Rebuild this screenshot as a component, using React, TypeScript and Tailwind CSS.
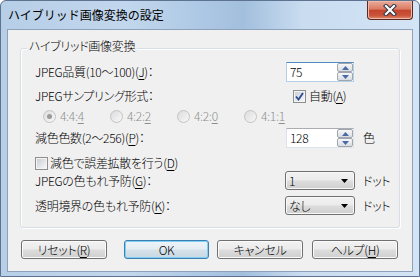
import type { ReactNode } from "react";

const btnBg =
  "bg-[linear-gradient(to_bottom,#f2f2f2_0%,#ebebeb_48%,#dddddd_52%,#cfcfcf_100%)]";

function Key({ children }: { children: ReactNode }) {
  return <span className="underline underline-offset-[2px]">{children}</span>;
}

function SpinArrow({ up }: { up?: boolean }) {
  return (
    <div className="flex flex-1 items-center justify-center rounded-[2px] border border-[#9fa6ad] bg-linear-to-b from-[#f7f7f7] to-[#d9dde2]">
      <svg width="7" height="4" viewBox="0 0 7 4">
        <path d={up ? "M0 4 L3.5 0 L7 4 Z" : "M0 0 L3.5 4 L7 0 Z"} fill="#4a69a8" />
      </svg>
    </div>
  );
}

function Spin({ value, focused }: { value: string; focused?: boolean }) {
  return (
    <div
      className={`flex h-[20px] w-[68px] border bg-white ${
        focused ? "border-[#b6d0e8] border-t-[#4f8ac0]" : "border-[#dde3ea] border-t-[#abadb3]"
      }`}
    >
      <div className="flex flex-1 items-center pl-[3px]">{value}</div>
      <div className="flex w-[16px] flex-col">
        <SpinArrow up />
        <SpinArrow />
      </div>
    </div>
  );
}

function Combo({ value }: { value: string }) {
  return (
    <div
      className={`flex h-[19px] w-[70px] items-center justify-between rounded-[3px] border border-[#707070] pl-[3px] pr-[6px] shadow-[inset_0_0_0_1px_#f8f8f8] ${btnBg}`}
    >
      <span>{value}</span>
      <svg width="7" height="4" viewBox="0 0 7 4">
        <path d="M0 0 L7 0 L3.5 4 Z" fill="#000" />
      </svg>
    </div>
  );
}

function Check({ checked }: { checked?: boolean }) {
  return (
    <div className="flex h-[13px] w-[13px] items-center justify-center border border-[#8e8f8f] bg-white">
      <div className="flex h-[11px] w-[11px] items-center justify-center border border-[#f4f4f4] bg-linear-to-br from-[#cbcfd5] to-[#f6f6f6]">
        {checked && (
          <svg width="9" height="9" viewBox="0 0 9 9">
            <path d="M1 4.5 L3.5 7.5 L8 1" stroke="#2a4a96" strokeWidth="1.8" fill="none" />
          </svg>
        )}
      </div>
    </div>
  );
}

function Radio({ label, k, checked }: { label: string; k: string; checked?: boolean }) {
  return (
    <div className="flex w-[67px] items-center gap-[4px] text-[#8d8d8d]">
      <div className="flex h-[13px] w-[13px] items-center justify-center rounded-full border border-[#c4c4c4] bg-linear-to-br from-[#dcdcdc] to-[#f8f8f8]">
        {checked && <div className="h-[5px] w-[5px] rounded-full bg-[#9a9a9a]" />}
      </div>
      <span>
        {label}
        <Key>{k}</Key>
      </span>
    </div>
  );
}

function Btn({ children, def, className }: { children: ReactNode; def?: boolean; className: string }) {
  return (
    <button
      className={`flex h-[19px] items-center justify-center rounded-[3px] border ${
        def
          ? "border-[#3c7fb1] shadow-[inset_0_0_0_1px_#7fd0f4] bg-[linear-gradient(to_bottom,#eef4f8_0%,#e4edf3_48%,#d6e2ea_52%,#c9d7e1_100%)]"
          : `border-[#707070] shadow-[inset_0_0_0_1px_#fbfbfb] ${btnBg}`
      } ${className}`}
    >
      {children}
    </button>
  );
}

export default function App() {
  return (
    <div className="flex h-[277px] w-[420px] flex-col overflow-hidden rounded-t-[6px] border border-[#5d7390] bg-[linear-gradient(to_right,#b7cee8_0%,#c2d7ed_30%,#adc8e4_48%,#a2bfdd_58%,#c9dcf0_72%,#d3e4f5_100%)] font-['Noto_Sans_CJK_JP',sans-serif] text-[12px] leading-[16px] font-light tracking-[-0.3px] text-black [font-feature-settings:'palt']">
      <div className="flex h-[28px] shrink-0">
        <div className="pl-[7px] pt-[6px] text-[12px] font-normal tracking-normal [font-feature-settings:normal]">ハイブリッド画像変換の設定</div>
        <div className="ml-auto mr-[6px] flex h-[19px] w-[46px] items-center justify-center rounded-b-[4px] border border-t-0 border-[#5a2a22] bg-[linear-gradient(to_bottom,#e9ad9c_0%,#db7a63_45%,#c4452d_52%,#c9543a_80%,#e08a70_100%)] shadow-[inset_0_0_0_1px_#f0b8a8]">
          <svg width="14" height="12" viewBox="0 0 14 12">
            <path d="M3 2 L11 10 M11 2 L3 10" stroke="#2b3548" strokeWidth="4.2" strokeLinecap="square" />
            <path d="M3 2 L11 10 M11 2 L3 10" stroke="#ffffff" strokeWidth="2.2" strokeLinecap="square" />
          </svg>
        </div>
      </div>

      <div className="mx-[6px] mb-[4px] flex flex-1 flex-col border border-[#8ea1ba] bg-[#f0f0f0]">
        <div className="relative mx-[12px] mt-[18px] h-[180px] rounded-[3px] border border-[#d5dfe5] pl-[14px] shadow-[inset_1px_1px_0_#ffffff,1px_1px_0_#ffffff]">
          <span className="absolute left-[6px] top-[-11px] bg-[#f0f0f0] px-[2px]">ハイブリッド画像変換</span>

          <div className="mt-[13px] flex h-[20px] items-center">
            <div className="w-[251px]">
              JPEG品質(10～100)(<Key>J</Key>)：
            </div>
            <Spin value="75" focused />
          </div>

          <div className="mt-[6px] flex h-[16px] items-center">
            <div className="w-[251px]">JPEGサンプリング形式：</div>
            <div className="flex items-center gap-[3px] pl-[7px]">
              <Check checked />
              <span>
                自動(<Key>A</Key>)
              </span>
            </div>
          </div>

          <div className="mt-[4px] flex h-[16px] items-center pl-[8px]">
            <Radio label="4:4:" k="4" checked />
            <Radio label="4:2:" k="2" />
            <Radio label="4:2:" k="0" />
            <Radio label="4:1:" k="1" />
          </div>

          <div className="mt-[4px] flex h-[20px] items-center">
            <div className="w-[251px]">
              減色色数(2～256)(<Key>P</Key>)：
            </div>
            <Spin value="128" />
            <span className="ml-[9px]">色</span>
          </div>

          <div className="mt-[8px] flex h-[14px] items-center gap-[2px]">
            <Check />
            <span>
              減色で誤差拡散を行う(<Key>D</Key>)
            </span>
          </div>

          <div className="mt-[1px] flex h-[19px] items-center">
            <div className="w-[250px]">
              JPEGの色もれ予防(<Key>G</Key>)：
            </div>
            <Combo value="1" />
            <span className="ml-[8px]">ドット</span>
          </div>

          <div className="mt-[6px] flex h-[19px] items-center">
            <div className="w-[250px]">
              透明境界の色もれ予防(<Key>K</Key>)：
            </div>
            <Combo value="なし" />
            <span className="ml-[8px]">ドット</span>
          </div>
        </div>

        <div className="mt-[12px] flex">
          <Btn className="ml-[13px] w-[86px]">
            リセット(<Key>R</Key>)
          </Btn>
          <Btn def className="ml-[17px] w-[85px]">
            OK
          </Btn>
          <Btn className="ml-[8px] w-[86px]">キャンセル</Btn>
          <Btn className="ml-[9px] w-[86px]">
            ヘルプ(<Key>H</Key>)
          </Btn>
        </div>
      </div>
    </div>
  );
}
